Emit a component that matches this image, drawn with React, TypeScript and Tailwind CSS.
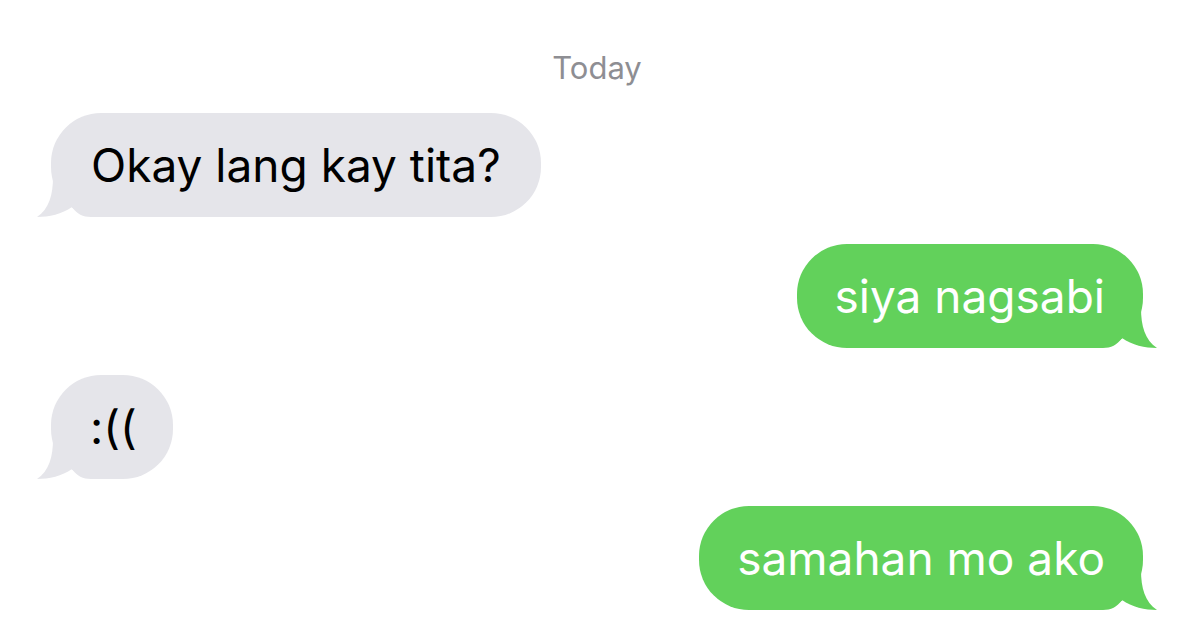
import React from "react";

const GRAY = "#e5e5ea";
const GREEN = "#62d15b";

function Tail({ color, side }: { color: string; side: "left" | "right" }) {
  return (
    <svg
      width="66"
      height="42"
      viewBox="0 0 66 42"
      className={
        side === "left"
          ? "absolute bottom-0 left-[-14px]"
          : "absolute bottom-0 right-[-14px] -scale-x-100"
      }
    >
      <path
        d="M16,2 C16,20 12,34 0,42 C12,42 25,39 35,32 C40,39 46,42 54,42 L66,42 L66,2 Z"
        fill={color}
      />
    </svg>
  );
}

function Bubble({
  text,
  side,
  narrow,
}: {
  text: string;
  side: "left" | "right";
  narrow?: boolean;
}) {
  const isLeft = side === "left";
  const cls = isLeft
    ? narrow
      ? "relative flex h-[104px] items-center rounded-[50px] bg-[#e5e5ea] pl-[39px] pr-[36px] text-black"
      : "relative flex h-[104px] items-center rounded-[50px] bg-[#e5e5ea] px-[40px] text-black"
    : "relative flex h-[104px] items-center rounded-[50px] bg-[#62d15b] px-[38px] text-white";
  return (
    <div className={isLeft ? "flex justify-start" : "flex justify-end"}>
      <div className={cls}>
        <Tail color={isLeft ? GRAY : GREEN} side={side} />
        <span className="relative text-[46px] leading-none">{text}</span>
      </div>
    </div>
  );
}

export default function App() {
  return (
    <div
      className="flex h-[635px] w-full flex-col overflow-hidden bg-white pl-[51px] pr-[57px]"
      style={{ fontFamily: 'Inter, "Noto Sans", "Liberation Sans", sans-serif' }}
    >
      <div className="mt-[51px] text-center text-[31px] leading-[34px] text-[#8e8e93]">Today</div>
      <div className="mt-[28px]">
        <Bubble text="Okay lang kay tita?" side="left" />
      </div>
      <div className="mt-[27px]">
        <Bubble text="siya nagsabi" side="right" />
      </div>
      <div className="mt-[27px]">
        <Bubble text=":((" side="left" narrow />
      </div>
      <div className="mt-[27px]">
        <Bubble text="samahan mo ako" side="right" />
      </div>
    </div>
  );
}
